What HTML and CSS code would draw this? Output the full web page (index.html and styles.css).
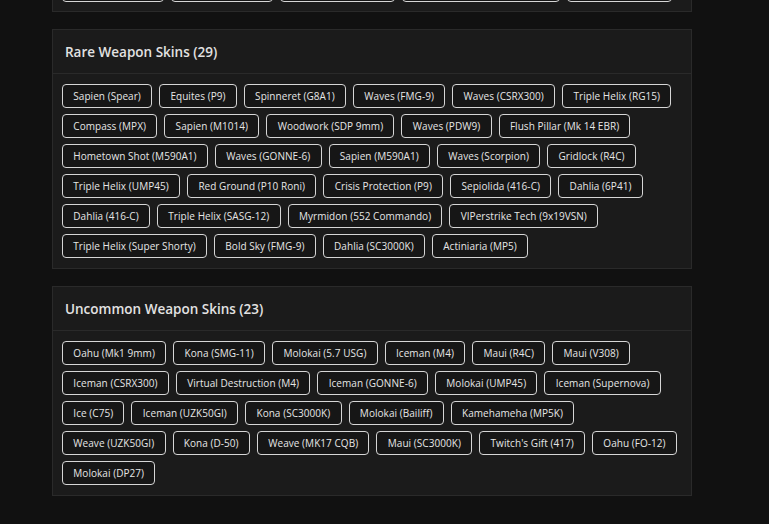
FILE: index.html
```html
<!DOCTYPE html>
<html lang="en">
<head>
    <meta charset="UTF-8">
    <meta name="viewport" content="width=device-width, initial-scale=1.0">
    <title>Weapon Skins</title>
    <link rel="stylesheet" href="styles.css">
</head>
<body>
    <main class="skins">
        <section class="panel panel-clipped">
            <div class="panel-body">
                <span class="skin">Nebula (SMG-11)</span>
                <span class="skin">Eclipse (M590A1)</span>
                <span class="skin">Starfall (Supernova)</span>
                <span class="skin">Hyperdrive (552 Commando)</span>
                <span class="skin">Aurora (SC3000K)</span>
            </div>
        </section>

        <section class="panel">
            <h2 class="panel-title">Rare Weapon Skins (29)</h2>
            <div class="panel-body">
                <span class="skin">Sapien (Spear)</span>
                <span class="skin">Equites (P9)</span>
                <span class="skin">Spinneret (G8A1)</span>
                <span class="skin">Waves (FMG-9)</span>
                <span class="skin">Waves (CSRX300)</span>
                <span class="skin">Triple Helix (RG15)</span>
                <span class="skin">Compass (MPX)</span>
                <span class="skin">Sapien (M1014)</span>
                <span class="skin">Woodwork (SDP 9mm)</span>
                <span class="skin">Waves (PDW9)</span>
                <span class="skin">Flush Pillar (Mk 14 EBR)</span>
                <span class="skin">Hometown Shot (M590A1)</span>
                <span class="skin">Waves (GONNE-6)</span>
                <span class="skin">Sapien (M590A1)</span>
                <span class="skin">Waves (Scorpion)</span>
                <span class="skin">Gridlock (R4C)</span>
                <span class="skin">Triple Helix (UMP45)</span>
                <span class="skin">Red Ground (P10 Roni)</span>
                <span class="skin">Crisis Protection (P9)</span>
                <span class="skin">Sepiolida (416-C)</span>
                <span class="skin">Dahlia (6P41)</span>
                <span class="skin">Dahlia (416-C)</span>
                <span class="skin">Triple Helix (SASG-12)</span>
                <span class="skin">Myrmidon (552 Commando)</span>
                <span class="skin">VIPerstrike Tech (9x19VSN)</span>
                <span class="skin">Triple Helix (Super Shorty)</span>
                <span class="skin">Bold Sky (FMG-9)</span>
                <span class="skin">Dahlia (SC3000K)</span>
                <span class="skin">Actiniaria (MP5)</span>
            </div>
        </section>

        <section class="panel">
            <h2 class="panel-title">Uncommon Weapon Skins (23)</h2>
            <div class="panel-body">
                <span class="skin">Oahu (Mk1 9mm)</span>
                <span class="skin">Kona (SMG-11)</span>
                <span class="skin">Molokai (5.7 USG)</span>
                <span class="skin">Iceman (M4)</span>
                <span class="skin">Maui (R4C)</span>
                <span class="skin">Maui (V308)</span>
                <span class="skin">Iceman (CSRX300)</span>
                <span class="skin">Virtual Destruction (M4)</span>
                <span class="skin">Iceman (GONNE-6)</span>
                <span class="skin">Molokai (UMP45)</span>
                <span class="skin">Iceman (Supernova)</span>
                <span class="skin">Ice (C75)</span>
                <span class="skin">Iceman (UZK50GI)</span>
                <span class="skin">Kona (SC3000K)</span>
                <span class="skin">Molokai (Bailiff)</span>
                <span class="skin">Kamehameha (MP5K)</span>
                <span class="skin">Weave (UZK50GI)</span>
                <span class="skin">Kona (D-50)</span>
                <span class="skin">Weave (MK17 CQB)</span>
                <span class="skin">Maui (SC3000K)</span>
                <span class="skin">Twitch's Gift (417)</span>
                <span class="skin">Oahu (FO-12)</span>
                <span class="skin">Molokai (DP27)</span>
            </div>
        </section>
    </main>
</body>
</html>
```

FILE: styles.css
```css
body {
    margin: 0;
    background-color: #111111;
    color: #e4e4e4;
    font-family: "Open Sans", "Noto Sans", sans-serif;
}

.skins {
    width: 640px;
    margin-left: 52px;
    display: flex;
    flex-direction: column;
    gap: 17px;
}

.panel {
    background-color: #1b1b1b;
    border: 1px solid #2a2a2a;
}

/* the panel above has scrolled mostly out of view */
.panel-clipped {
    margin-top: -33px;
}

.panel-clipped .panel-body {
    padding-bottom: 9px;
}

.panel-title {
    margin: 0;
    height: 43px;
    padding: 0 12px;
    display: flex;
    align-items: center;
    font-size: 13.5px;
    font-weight: 600;
    color: #e2e2e2;
    border-bottom: 1px solid #2a2a2a;
}

.panel-body {
    display: flex;
    flex-wrap: wrap;
    gap: 6px 7px;
    padding: 10px 9px;
}

.skin {
    height: 24px;
    box-sizing: border-box;
    padding: 0 10.3px;
    display: flex;
    align-items: center;
    font-size: 10px;
    letter-spacing: 0.05px;
    color: #e6e6e6;
    background-color: #161616;
    border: 1px solid #d6d6d6;
    border-radius: 4px;
    white-space: nowrap;
}
```
